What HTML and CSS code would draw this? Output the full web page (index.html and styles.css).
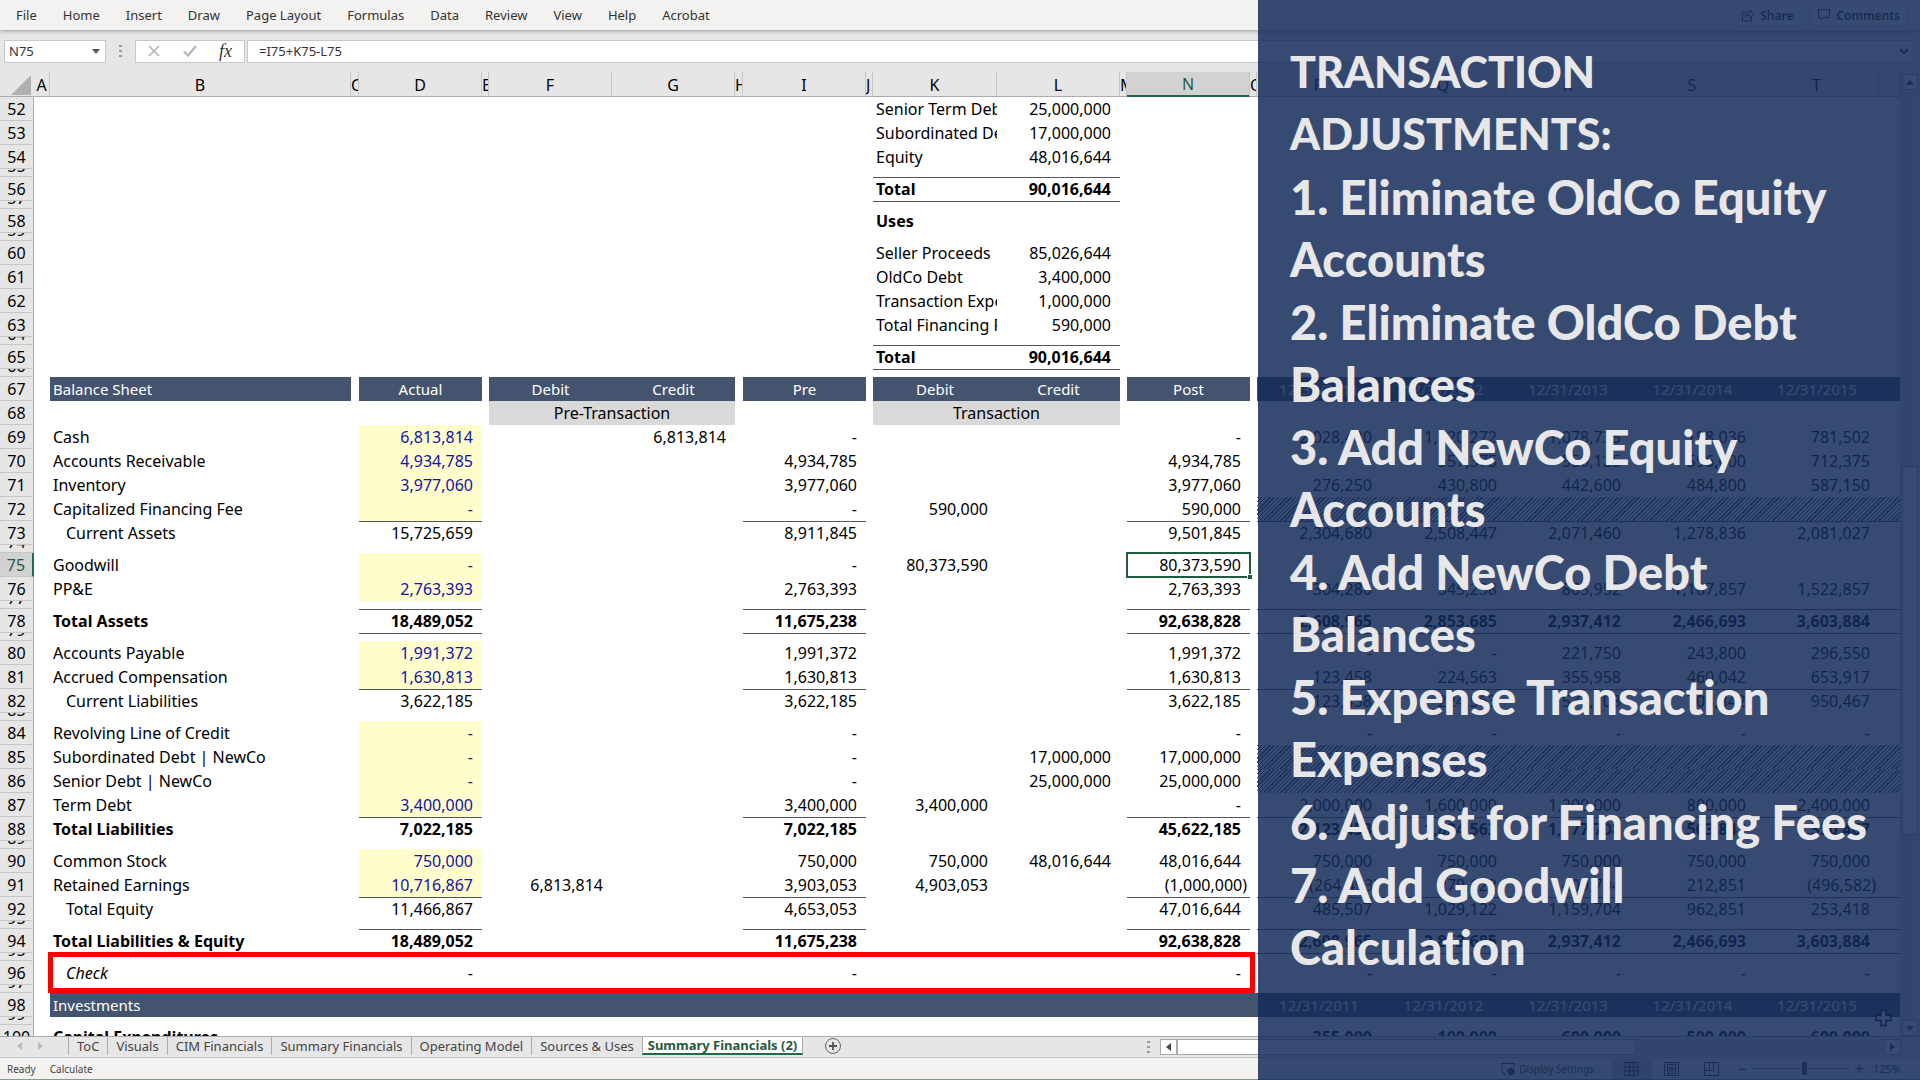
FILE: index.html
```html
<!DOCTYPE html>
<html lang="en">
<head>
<meta charset="utf-8">
<title>Summary Financials</title>
<link rel="stylesheet" href="styles.css">
</head>
<body>
<div class="app">
  <nav class="menubar">
    <a href="#">File</a><a href="#">Home</a><a href="#">Insert</a><a href="#">Draw</a><a href="#">Page Layout</a><a href="#">Formulas</a><a href="#">Data</a><a href="#">Review</a><a href="#">View</a><a href="#">Help</a><a href="#">Acrobat</a>
    <div class="menu-actions">
      <button class="action"><svg width="14" height="14" viewBox="0 0 14 14"><path d="M5 4H1.500v9h9V9M4 9c0-3 2-4.500 5-4.500V2l4 4-4 4V7C7 7 5 7.500 4 9z"/></svg>Share</button>
      <button class="action"><svg width="14" height="14" viewBox="0 0 14 14"><path d="M1.500 1.500h11v8H6L3.500 12V9.500h-2z"/></svg>Comments</button>
    </div>
  </nav>

  <div class="formula-row">
    <div class="name-box"><input aria-label="Name box" value="N75"><button aria-label="Names"><svg width="8" height="5" viewBox="0 0 8 5"><path d="M0 0h8L4 5z" fill="#555"/></svg></button></div>
    <span class="dots"></span>
    <div class="fx-box">
      <button aria-label="Cancel"><svg width="12" height="12" viewBox="0 0 12 12"><path d="M1 1l10 10M11 1L1 11" fill="none" stroke="#b4b4b4" stroke-width="1.600"/></svg></button>
      <button aria-label="Enter"><svg width="14" height="12" viewBox="0 0 14 12"><path d="M1 6.500L5 10.500 13 1" fill="none" stroke="#b4b4b4" stroke-width="2.200"/></svg></button>
      <button class="fx">fx</button>
    </div>
    <input class="formula" aria-label="Formula bar" value="=I75+K75-L75">
    <button class="expand" aria-label="Expand formula bar"><svg width="10" height="7" viewBox="0 0 10 7"><path d="M1 1l4 4 4-4" fill="none" stroke="#333" stroke-width="2"/></svg></button>
  </div>

  <main class="workspace">
    <div class="sheet">
    <table class="grid">
      <colgroup>
        <col class="w-row"><col class="w-a"><col class="w-b"><col class="w-gap-wide"><col class="w-num"><col class="w-gap"><col class="w-num"><col class="w-num"><col class="w-gap-wide"><col class="w-num"><col class="w-gap"><col class="w-num-wide"><col class="w-num"><col class="w-gap"><col class="w-num"><col class="w-gap"><col class="w-num-wide"><col class="w-year"><col class="w-num-wide"><col class="w-year"><col class="w-num-wide"><col>
      </colgroup>
      <thead>
        <tr><th class="corner"><svg width="20" height="20" viewBox="0 0 20 20"><path d="M20 0v20H0z" fill="#b0b0b0"/></svg></th><th>A</th><th>B</th><th class="cut">C</th><th>D</th><th class="cut">E</th><th>F</th><th>G</th><th class="cut">H</th><th>I</th><th class="cut">J</th><th>K</th><th>L</th><th class="cut">M</th><th class="sel">N</th><th class="cut">O</th><th>P</th><th>Q</th><th>R</th><th>S</th><th>T</th><th></th></tr>
      </thead>
      <tbody>
        <tr><th>52</th><td colspan="10"></td><td>Senior Term Debt</td><td class="n">25,000,000</td><td colspan="9"></td></tr>
        <tr><th>53</th><td colspan="10"></td><td>Subordinated Debt</td><td class="n">17,000,000</td><td colspan="9"></td></tr>
        <tr><th>54</th><td colspan="10"></td><td>Equity</td><td class="n">48,016,644</td><td colspan="9"></td></tr>
        <tr class="s"><th><span>55</span></th><td colspan="21"></td></tr>
        <tr class="b"><th>56</th><td colspan="10"></td><td class="t u">Total</td><td class="n t u">90,016,644</td><td colspan="9"></td></tr>
        <tr class="s"><th><span>57</span></th><td colspan="21"></td></tr>
        <tr class="b"><th>58</th><td colspan="10"></td><td>Uses</td><td colspan="10"></td></tr>
        <tr class="s"><th><span>59</span></th><td colspan="21"></td></tr>
        <tr><th>60</th><td colspan="10"></td><td>Seller Proceeds</td><td class="n">85,026,644</td><td colspan="9"></td></tr>
        <tr><th>61</th><td colspan="10"></td><td>OldCo Debt</td><td class="n">3,400,000</td><td colspan="9"></td></tr>
        <tr><th>62</th><td colspan="10"></td><td>Transaction Expenses</td><td class="n">1,000,000</td><td colspan="9"></td></tr>
        <tr><th>63</th><td colspan="10"></td><td>Total Financing Fees</td><td class="n">590,000</td><td colspan="9"></td></tr>
        <tr class="s"><th><span>64</span></th><td colspan="21"></td></tr>
        <tr class="b"><th>65</th><td colspan="10"></td><td class="t u">Total</td><td class="n t u">90,016,644</td><td colspan="9"></td></tr>
        <tr class="s"><th><span>66</span></th><td colspan="21"></td></tr>
        <tr><th>67</th><td></td><td class="h">Balance Sheet</td><td></td><td class="h c">Actual</td><td></td><td class="h c">Debit</td><td class="h c">Credit</td><td></td><td class="h c">Pre</td><td></td><td class="h c">Debit</td><td class="h c">Credit</td><td></td><td class="h c">Post</td><td></td><td class="h c">12/31/2011</td><td class="h c">12/31/2012</td><td class="h c">12/31/2013</td><td class="h c">12/31/2014</td><td class="h c">12/31/2015</td><td class="h"></td></tr>
        <tr><th>68</th><td colspan="5"></td><td class="g c" colspan="2">Pre-Transaction</td><td colspan="3"></td><td class="g c" colspan="2">Transaction</td><td colspan="9"></td></tr>
        <tr><th>69</th><td></td><td>Cash</td><td></td><td class="n in">6,813,814</td><td colspan="2"></td><td class="n">6,813,814</td><td></td><td class="n">-</td><td colspan="4"></td><td class="n">-</td><td></td><td class="n">2,028,430</td><td class="n">1,520,272</td><td class="n">1,078,735</td><td class="n">198,036</td><td class="n">781,502</td><td></td></tr>
        <tr><th>70</th><td></td><td>Accounts Receivable</td><td></td><td class="n in">4,934,785</td><td colspan="4"></td><td class="n">4,934,785</td><td colspan="4"></td><td class="n">4,934,785</td><td></td><td class="n">-</td><td class="n">557,375</td><td class="n">550,125</td><td class="n">596,000</td><td class="n">712,375</td><td></td></tr>
        <tr><th>71</th><td></td><td>Inventory</td><td></td><td class="n in">3,977,060</td><td colspan="4"></td><td class="n">3,977,060</td><td colspan="4"></td><td class="n">3,977,060</td><td></td><td class="n">276,250</td><td class="n">430,800</td><td class="n">442,600</td><td class="n">484,800</td><td class="n">587,150</td><td></td></tr>
        <tr><th>72</th><td></td><td>Capitalized Financing Fee</td><td></td><td class="n in">-</td><td colspan="4"></td><td class="n">-</td><td></td><td class="n">590,000</td><td colspan="2"></td><td class="n">590,000</td><td></td><td class="hatch" colspan="6"></td></tr>
        <tr><th>73</th><td></td><td class="i">Current Assets</td><td></td><td class="n t">15,725,659</td><td colspan="4"></td><td class="n t">8,911,845</td><td colspan="4"></td><td class="n t">9,501,845</td><td></td><td class="n t">2,304,680</td><td class="n t">2,508,447</td><td class="n t">2,071,460</td><td class="n t">1,278,836</td><td class="n t">2,081,027</td><td class="t"></td></tr>
        <tr class="s"><th><span>74</span></th><td colspan="21"></td></tr>
        <tr><th class="sel">75</th><td></td><td>Goodwill</td><td></td><td class="n in">-</td><td colspan="4"></td><td class="n">-</td><td></td><td class="n">80,373,590</td><td colspan="2"></td><td class="n cursor">80,373,590</td><td colspan="7"></td></tr>
        <tr><th>76</th><td></td><td>PP&amp;E</td><td></td><td class="n in">2,763,393</td><td colspan="4"></td><td class="n">2,763,393</td><td colspan="4"></td><td class="n">2,763,393</td><td></td><td class="n">304,286</td><td class="n">345,238</td><td class="n">865,952</td><td class="n">1,187,857</td><td class="n">1,522,857</td><td></td></tr>
        <tr class="s"><th><span>77</span></th><td colspan="21"></td></tr>
        <tr class="b"><th>78</th><td></td><td>Total Assets</td><td></td><td class="n t u">18,489,052</td><td colspan="4"></td><td class="n t u">11,675,238</td><td colspan="4"></td><td class="n t u">92,638,828</td><td></td><td class="n t u">2,608,965</td><td class="n t u">2,853,685</td><td class="n t u">2,937,412</td><td class="n t u">2,466,693</td><td class="n t u">3,603,884</td><td class="t u"></td></tr>
        <tr class="s"><th><span>79</span></th><td colspan="21"></td></tr>
        <tr><th>80</th><td></td><td>Accounts Payable</td><td></td><td class="n in">1,991,372</td><td colspan="4"></td><td class="n">1,991,372</td><td colspan="4"></td><td class="n">1,991,372</td><td></td><td class="n">-</td><td class="n">-</td><td class="n">221,750</td><td class="n">243,800</td><td class="n">296,550</td><td></td></tr>
        <tr><th>81</th><td></td><td>Accrued Compensation</td><td></td><td class="n in">1,630,813</td><td colspan="4"></td><td class="n">1,630,813</td><td colspan="4"></td><td class="n">1,630,813</td><td></td><td class="n">123,458</td><td class="n">224,563</td><td class="n">355,958</td><td class="n">460,042</td><td class="n">653,917</td><td></td></tr>
        <tr><th>82</th><td></td><td class="i">Current Liabilities</td><td></td><td class="n t">3,622,185</td><td colspan="4"></td><td class="n t">3,622,185</td><td colspan="4"></td><td class="n t">3,622,185</td><td></td><td class="n t">123,458</td><td class="n t">224,563</td><td class="n t">577,708</td><td class="n t">703,842</td><td class="n t">950,467</td><td class="t"></td></tr>
        <tr class="s"><th><span>83</span></th><td colspan="21"></td></tr>
        <tr><th>84</th><td></td><td>Revolving Line of Credit</td><td></td><td class="n in">-</td><td colspan="4"></td><td class="n">-</td><td colspan="4"></td><td class="n">-</td><td></td><td class="n">-</td><td class="n">-</td><td class="n">-</td><td class="n">-</td><td class="n">-</td><td></td></tr>
        <tr><th>85</th><td></td><td>Subordinated Debt | NewCo</td><td></td><td class="n in">-</td><td colspan="4"></td><td class="n">-</td><td colspan="2"></td><td class="n">17,000,000</td><td></td><td class="n">17,000,000</td><td></td><td class="hatch" colspan="6"></td></tr>
        <tr><th>86</th><td></td><td>Senior Debt | NewCo</td><td></td><td class="n in">-</td><td colspan="4"></td><td class="n">-</td><td colspan="2"></td><td class="n">25,000,000</td><td></td><td class="n">25,000,000</td><td></td><td class="hatch" colspan="6"></td></tr>
        <tr><th>87</th><td></td><td>Term Debt</td><td></td><td class="n in">3,400,000</td><td colspan="4"></td><td class="n">3,400,000</td><td></td><td class="n">3,400,000</td><td colspan="2"></td><td class="n">-</td><td></td><td class="n">2,000,000</td><td class="n">1,600,000</td><td class="n">1,200,000</td><td class="n">800,000</td><td class="n">2,400,000</td><td></td></tr>
        <tr class="b"><th>88</th><td></td><td>Total Liabilities</td><td></td><td class="n t">7,022,185</td><td colspan="4"></td><td class="n t">7,022,185</td><td colspan="4"></td><td class="n t">45,622,185</td><td></td><td class="n t">2,123,458</td><td class="n t">1,824,563</td><td class="n t">1,777,708</td><td class="n t">1,503,842</td><td class="n t">3,350,467</td><td class="t"></td></tr>
        <tr class="s"><th><span>89</span></th><td colspan="21"></td></tr>
        <tr><th>90</th><td></td><td>Common Stock</td><td></td><td class="n in">750,000</td><td colspan="4"></td><td class="n">750,000</td><td></td><td class="n">750,000</td><td class="n">48,016,644</td><td></td><td class="n">48,016,644</td><td></td><td class="n">750,000</td><td class="n">750,000</td><td class="n">750,000</td><td class="n">750,000</td><td class="n">750,000</td><td></td></tr>
        <tr><th>91</th><td></td><td>Retained Earnings</td><td></td><td class="n in">10,716,867</td><td></td><td class="n">6,813,814</td><td colspan="2"></td><td class="n">3,903,053</td><td></td><td class="n">4,903,053</td><td colspan="2"></td><td class="n neg">(1,000,000)</td><td></td><td class="n neg">(264,493)</td><td class="n">279,122</td><td class="n">409,704</td><td class="n">212,851</td><td class="n neg">(496,582)</td><td></td></tr>
        <tr><th>92</th><td></td><td class="i">Total Equity</td><td></td><td class="n t">11,466,867</td><td colspan="4"></td><td class="n t">4,653,053</td><td colspan="4"></td><td class="n t">47,016,644</td><td></td><td class="n t">485,507</td><td class="n t">1,029,122</td><td class="n t">1,159,704</td><td class="n t">962,851</td><td class="n t">253,418</td><td class="t"></td></tr>
        <tr class="s"><th><span>93</span></th><td colspan="21"></td></tr>
        <tr class="b"><th>94</th><td></td><td>Total Liabilities &amp; Equity</td><td></td><td class="n t u">18,489,052</td><td colspan="4"></td><td class="n t u">11,675,238</td><td colspan="4"></td><td class="n t u">92,638,828</td><td></td><td class="n t u">2,608,965</td><td class="n t u">2,853,685</td><td class="n t u">2,937,412</td><td class="n t u">2,466,693</td><td class="n t u">3,603,884</td><td class="t u"></td></tr>
        <tr class="s"><th><span>95</span></th><td colspan="21"></td></tr>
        <tr><th>96</th><td></td><td class="i check">Check</td><td></td><td class="n">-</td><td colspan="4"></td><td class="n">-</td><td colspan="4"></td><td class="n">-</td><td></td><td class="n">-</td><td class="n">-</td><td class="n">-</td><td class="n">-</td><td class="n">-</td><td></td></tr>
        <tr class="s"><th><span>97</span></th><td colspan="21"></td></tr>
        <tr><th>98</th><td></td><td class="h">Investments</td><td class="h" colspan="13"></td><td class="h c">12/31/2011</td><td class="h c">12/31/2012</td><td class="h c">12/31/2013</td><td class="h c">12/31/2014</td><td class="h c">12/31/2015</td><td class="h"></td></tr>
        <tr class="s"><th><span>99</span></th><td colspan="21"></td></tr>
        <tr class="b"><th>100</th><td></td><td>Capital Expenditures</td><td colspan="13"></td><td class="n">355,000</td><td class="n">100,000</td><td class="n">600,000</td><td class="n">500,000</td><td class="n">600,000</td><td></td></tr>
      </tbody>
    </table>
    </div>
    <div class="vscroll">
      <button aria-label="Scroll up"><svg width="8" height="5" viewBox="0 0 8 5"><path d="M0 5h8L4 0z" fill="#555"/></svg></button>
      <div class="vtrack"><div class="vthumb"></div></div>
      <button aria-label="Scroll down"><svg width="8" height="5" viewBox="0 0 8 5"><path d="M0 0h8L4 5z" fill="#555"/></svg></button>
    </div>
    <svg class="pointer" width="18" height="18" viewBox="0 0 18 18"><path d="M6 1.500h5v5h5v5h-5v5H6v-5H1v-5h5z" fill="#fff" stroke="#000" stroke-width="1.500"/></svg>
  </main>

  <div class="tabbar">
    <div class="tab-nav"><svg width="5" height="8" viewBox="0 0 5 8"><path d="M5 0v8L0 4z" fill="#bbb"/></svg><svg width="5" height="8" viewBox="0 0 5 8"><path d="M0 0v8l5-4z" fill="#bbb"/></svg></div>
    <a href="#" class="tab">ToC</a><a href="#" class="tab">Visuals</a><a href="#" class="tab">CIM Financials</a><a href="#" class="tab">Summary Financials</a><a href="#" class="tab">Operating Model</a><a href="#" class="tab">Sources &amp; Uses</a><a href="#" class="tab active">Summary Financials (2)</a>
    <button class="add" aria-label="New sheet"><svg width="18" height="18" viewBox="0 0 18 18"><circle cx="9" cy="9" r="7.500" fill="none" stroke="#666"/><path d="M9 5v8M5 9h8" stroke="#555" stroke-width="1.800"/></svg></button>
    <span class="dots"></span>
    <div class="hscroll">
      <button aria-label="Scroll left"><svg width="5" height="8" viewBox="0 0 5 8"><path d="M5 0v8L0 4z" fill="#444"/></svg></button>
      <div class="htrack"><div class="hthumb"></div></div>
      <button aria-label="Scroll right"><svg width="5" height="8" viewBox="0 0 5 8"><path d="M0 0v8l5-4z" fill="#444"/></svg></button>
    </div>
  </div>

  <footer class="status">
    <span>Ready</span><span>Calculate</span>
    <div class="status-right">
      <button class="display"><svg width="15" height="14" viewBox="0 0 15 14" fill="none" stroke="#444"><path d="M4 10.500H1v-9h12v4M2 12.500h3"/><circle cx="10" cy="9.500" r="2.500" stroke-width="2"/><path d="M10 5.500v8M6 9.500h8" stroke-width="1.500"/></svg>Display Settings</button>
      <button class="view on" aria-label="Normal"><svg width="15" height="14" viewBox="0 0 15 14" fill="none" stroke="#333"><path d="M1 .5h13v13H1zM5.500 0v14M9.500 0v14M1 5h13M1 9h13"/></svg></button>
      <button class="view" aria-label="Page Layout"><svg width="15" height="14" viewBox="0 0 15 14" fill="none" stroke="#333"><path d="M.5.5h14v13H.500zM3.500 2.500h8v9h-8zM5 5h5M5 7h5M5 9h5"/></svg></button>
      <button class="view" aria-label="Page Break Preview"><svg width="15" height="14" viewBox="0 0 15 14" fill="none" stroke="#333"><path d="M.5.5h14v13H.5zM.5 8.500h9V.5M5.500 0v8"/></svg></button>
      <span class="sign">−</span>
      <input type="range" class="zoom" min="0" max="100" value="54" aria-label="Zoom">
      <span class="sign">+</span>
      <span>125%</span>
    </div>
  </footer>

  <aside class="notes">
    <h1>TRANSACTION<br>ADJUSTMENTS:</h1>
    <p>1. Eliminate OldCo Equity<br>Accounts</p>
    <p>2. Eliminate OldCo Debt<br>Balances</p>
    <p>3. Add NewCo Equity<br>Accounts</p>
    <p>4. Add NewCo Debt<br>Balances</p>
    <p>5. Expense Transaction<br>Expenses</p>
    <p>6. Adjust for Financing Fees</p>
    <p>7. Add Goodwill<br>Calculation</p>
  </aside>
</div>
</body>
</html>
```
FILE: styles.css
```css
*, *::before, *::after { box-sizing: border-box; }
body { margin: 0; font-family: "Noto Sans", sans-serif; color: #000; }
button { border: 0; padding: 0; background: none; font: inherit; color: inherit; display: flex; align-items: center; justify-content: center; }
a { color: inherit; text-decoration: none; }
input { font: inherit; color: inherit; border: 0; padding: 0; min-width: 0; background: none; }

.app { position: relative; display: flex; flex-direction: column; height: 100vh; overflow: hidden; background: #e7e6e7; }

/* menu */
.menubar { display: flex; align-items: center; gap: 26px; height: 30px; padding: 0 12px 0 16px; background: #f3f2f1; font-size: 13px; color: #333; box-shadow: 0 1px 4px #999; z-index: 1; white-space: nowrap; }
.menu-actions { display: flex; gap: 8px; margin-left: auto; }
.action { gap: 5px; height: 22px; padding: 0 7px; border: 1px solid #ddd; background: #fff; font-size: 12px; font-weight: 600; }
.action svg { fill: none; stroke: #444; }

/* formula bar */
.formula-row { display: flex; align-items: center; height: 42px; padding: 0 6px 0 4px; font-size: 13px; color: #333; }
.name-box, .fx-box, .formula, .expand { height: 23px; background: #fff; border: 1px solid #c8c8c8; }
.name-box { display: flex; width: 102px; padding: 0 5px 0 4px; }
.name-box input { flex: 1; }
.dots { width: 3px; height: 13px; margin: 0 13px; background: repeating-linear-gradient(#999 0 2px, transparent 2px 5px); }
.fx-box { display: flex; justify-content: space-between; width: 110px; margin-right: 2px; padding: 0 12px; }
.fx { font: italic 18px "Liberation Serif", serif; }
.formula { flex: 1; padding-left: 11px; border-right: 0; }
.expand { width: 20px; border-left: 0; }

/* worksheet */
.workspace { position: relative; flex: 1; min-height: 0; display: flex; }
.sheet { flex: 1; min-width: 0; overflow: hidden; background: #fff; }
.grid { width: 100%; table-layout: fixed; border-collapse: separate; border-spacing: 0; font-size: 16px; line-height: 23px; }
.w-row { width: 34px; }
.w-a { width: 16px; }
.w-b { width: 301px; }
.w-gap { width: 7px; }
.w-gap-wide { width: 8px; }
.w-num { width: 123px; }
.w-num-wide { width: 124px; }
.w-year { width: 125px; }
.grid th, .grid td { height: 24px; padding: 1px 0 0; white-space: nowrap; overflow: hidden; text-align: left; }
.grid th { font-weight: 400; text-align: center; background: #e7e6e7; }
.grid thead th { border-right: 1px solid #c6c6c6; border-bottom: 1px solid #ababab; line-height: 22px; }
.grid thead .cut { text-align: left; }
.grid thead .corner { border-right-color: #e7e6e7; padding-right: 2px; }
.corner svg { display: block; margin-left: auto; }
.grid thead .sel { background: #d2d2d2; color: #1e5c3d; border-bottom: 2px solid #1e6b45; }
.grid tbody th { border-right: 1px solid #ababab; border-bottom: 1px solid #c6c6c6; line-height: 22px; }
.grid tbody .sel { background: #d2d2d2; color: #1e5c3d; border-right: 2px solid #1e6b45; }
.grid td { padding-left: 3px; }
.grid .n { padding: 1px 9px 0 0; text-align: right; }
.grid .neg { padding-right: 3px; }
.grid .i { padding-left: 16px; }
.grid .c { padding-left: 0; text-align: center; }
.grid .h { background: #44546f; color: #fff; font-size: 15px; }
.grid .g { background: #d9d9d9; }
.grid .in { background: #fffdcc; color: #1414a8; }
.b td { font-weight: 700; }
.t { box-shadow: inset 0 1px #555; }
.u { box-shadow: 0 1px #555; }
.t.u { box-shadow: inset 0 1px #555, 0 1px #555; }
.hatch { background: repeating-linear-gradient(135deg, #44546f 0 1px, transparent 1px 3px); }
.grid .s th, .grid .s td { height: 8px; padding: 0; line-height: 0; }
.s span { display: flex; align-items: flex-end; justify-content: center; height: 7px; overflow: hidden; line-height: 20px; }

/* active cell and its fill handle */
.grid .cursor { position: relative; overflow: visible; }
.cursor::before { content: ""; position: absolute; inset: -1px; border: 2px solid #1e5c3d; }
.cursor::after { content: ""; position: absolute; right: -2px; bottom: -2px; width: 5px; height: 5px; background: #1e5c3d; border: 1px solid #fff; border-width: 1px 0 0 1px; }

/* red frame round the check row */
.grid .check { position: relative; overflow: visible; font-style: italic; }
.check::after { content: ""; position: absolute; left: -2px; top: -9px; width: 1207px; height: 41px; border: 5px solid #fb0000; }

.vscroll { display: flex; flex-direction: column; width: 20px; padding: 2px 2px 0 1px; border-left: 1px solid #c6c6c6; }
.vscroll button { height: 16px; background: #fff; border: 1px solid #ababab; }
.vtrack { flex: 1; display: flex; flex-direction: column; padding-top: 376px; background: #dcdcdc; }
.vthumb { height: 369px; background: #fff; border: 1px solid #ababab; }
.pointer { position: absolute; right: 27px; bottom: 9px; }

/* sheet tabs */
.tabbar { display: flex; height: 22px; padding: 0 19px 2px 0; border-top: 1px solid #ababab; border-bottom: 1px solid #c6c6c6; font-size: 13px; color: #444; white-space: nowrap; }
.tab-nav { display: flex; align-items: center; gap: 16px; width: 68px; padding-left: 17px; }
.tab { display: flex; align-items: center; justify-content: center; padding: 0 8px; border-left: 1px solid #ababab; }
.active { padding: 0 5px; background: #fff; border-right: 1px solid #ababab; border-bottom: 2px solid #1e6b45; color: #1e5c3d; font-weight: 700; }
.add { margin-left: 21px; }
.tabbar .dots { margin: 4px 10px 0 auto; }
.hscroll { display: flex; width: 39%; padding: 2px 0 0; }
.hscroll button { width: 17px; background: #fff; border: 1px solid #ababab; }
.htrack { flex: 1; background: #dcdcdc; }
.hthumb { width: 65%; height: 100%; background: #fff; border: 1px solid #ababab; }

.status { display: flex; align-items: center; gap: 14px; height: 22px; padding: 0 19px 0 7px; background: #f3f2f1; border-bottom: 1px solid #7d9c8c; font-size: 10px; color: #444; white-space: nowrap; }
.status-right { display: flex; align-items: center; margin-left: auto; font-size: 11px; height: 100%; }
.display { gap: 3px; margin-right: 18px; font-size: 10px; }
.view { width: 40px; height: 100%; }
.on { background: #d2d2d2; }
.sign { width: 20px; text-align: center; font-size: 16px; }
.zoom { appearance: none; width: 97px; height: 14px; margin: 0; background: linear-gradient(#999, #999) center / 100% 1px no-repeat; }
.zoom::-webkit-slider-thumb { appearance: none; width: 5px; height: 13px; background: #555; }
.sign + span { margin-left: 4px; }

/* translucent caption panel */
.notes { position: absolute; z-index: 2; top: 0; bottom: 0; right: 0; width: 662px; padding: 41px 0 0 32px; background: rgba(20, 43, 89, .85); color: #e7e7ea; font: 900 47px/62px Lato, sans-serif; font-variant-ligatures: none; white-space: nowrap; }
.notes h1, .notes p { margin: 0 0 1px; font: inherit; font-variant-ligatures: none; }
.notes h1 { font-size: 43px; }
```
